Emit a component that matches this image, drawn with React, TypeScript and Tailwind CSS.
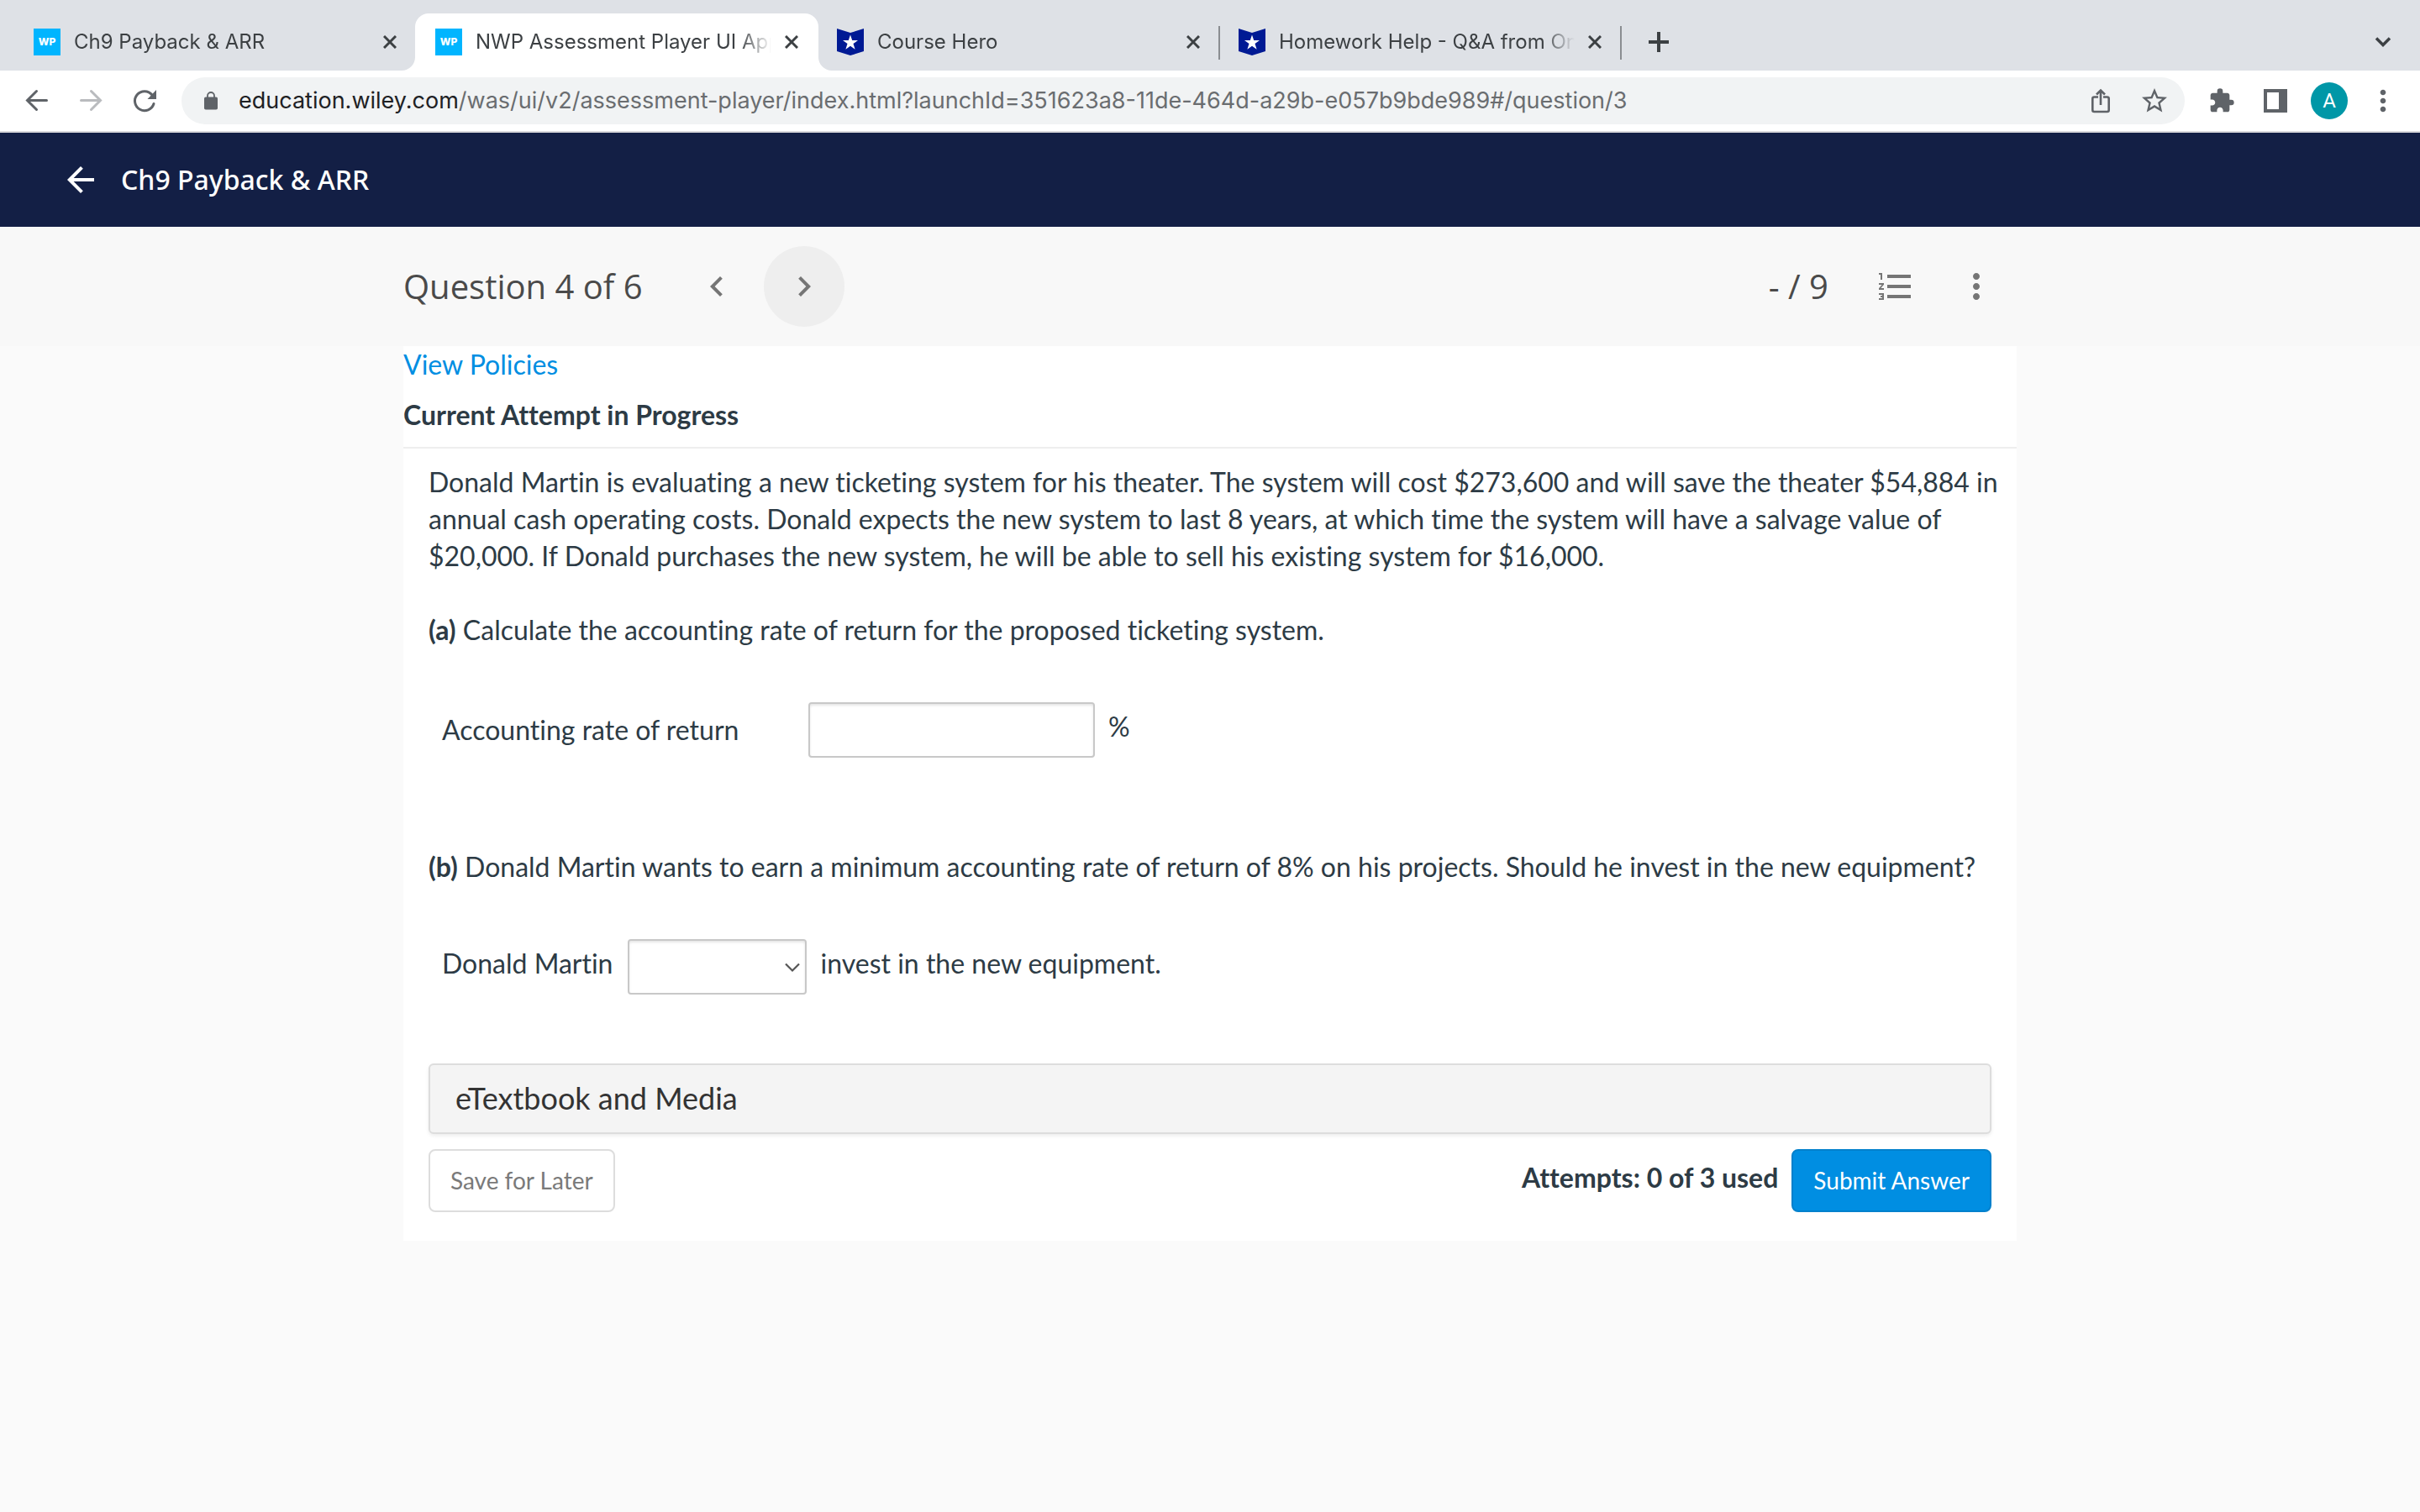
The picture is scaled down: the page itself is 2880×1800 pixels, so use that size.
import type { ReactNode } from "react";
import {
  MdArrowBack,
  MdChevronLeft,
  MdChevronRight,
  MdExtension,
  MdFormatListNumbered,
  MdMoreVert,
  MdStarBorder,
} from "react-icons/md";

function WileyIcon() {
  return (
    <span className="flex size-8 shrink-0 items-center justify-center bg-[#00b5ff] text-xs leading-none font-extrabold text-white">
      WP
    </span>
  );
}

function HeroIcon() {
  return (
    <svg viewBox="0 0 32 32" className="size-8 shrink-0" aria-hidden="true">
      <path d="M0 0 16 5 32 0V27L16 32 0 27Z" fill="#001a94" />
      <path d="M16 7.500 18.200 14H25L19.500 18 21.600 24.800 16 20.700 10.400 24.800 12.500 18 7 14H13.800Z" fill="#fff" />
    </svg>
  );
}

function Cross() {
  return (
    <svg viewBox="0 0 16 16" className="size-4" aria-hidden="true">
      <path d="M1 1 15 15M15 1 1 15" stroke="currentColor" strokeWidth="3" fill="none" />
    </svg>
  );
}

function ArrowLeft() {
  return (
    <svg viewBox="0 0 40 40" className="size-10" fill="none" stroke="currentColor" strokeWidth="3" strokeLinecap="round" aria-hidden="true">
      <path d="M31.500 19.500H9M19.500 8.500 8.500 19.500 19.500 30.500" />
    </svg>
  );
}

function ArrowRight() {
  return (
    <svg viewBox="0 0 40 40" className="size-10" fill="none" stroke="currentColor" strokeWidth="3" strokeLinecap="round" aria-hidden="true">
      <path d="M8.500 19.500H31M20.500 8.500 31.500 19.500 20.500 30.500" />
    </svg>
  );
}

function Reload() {
  return (
    <svg viewBox="0 0 40 40" className="size-10" fill="none" aria-hidden="true">
      <path d="M29 13A11.500 11.500 0 1 0 31 23.500" stroke="currentColor" strokeWidth="3" strokeLinecap="round" />
      <path d="M34 7V18H23.500Z" fill="currentColor" />
    </svg>
  );
}

type TabProps = { title: string; icon: ReactNode; active?: boolean; divider?: boolean };

function Tab({ title, icon, active, divider }: TabProps) {
  return (
    <div className="relative flex h-[68px] w-[478px] shrink-0 items-center pr-3.5 pl-6">
      {active && (
        <>
          <span className="absolute inset-y-0 left-0 -right-0.5 rounded-t-2xl bg-white" />
          <svg viewBox="0 0 16 16" className="absolute bottom-0 -left-4 size-4" aria-hidden="true">
            <path d="M16 0V16H0A16 16 0 0 0 16 0Z" fill="#fff" />
          </svg>
          <svg viewBox="0 0 16 16" className="absolute bottom-0 -right-[18px] size-4" aria-hidden="true">
            <path d="M0 0V16H16A16 16 0 0 1 0 0Z" fill="#fff" />
          </svg>
        </>
      )}
      <div className="relative flex min-w-0 flex-1 items-center">
        {icon}
        <span className="mr-2 ml-4 flex-1 overflow-hidden [mask-image:linear-gradient(to_right,black_89%,transparent)] text-2xl whitespace-nowrap text-[#3c4043]">
          {title}
        </span>
        <button type="button" aria-label={`Close ${title}`} className="flex size-8 items-center justify-center text-[#3c4043]">
          <Cross />
        </button>
      </div>
      {divider && <span className="absolute top-[15px] -right-0.5 h-10 w-0.5 bg-[#8a8d91]" />}
    </div>
  );
}

function BrowserChrome() {
  return (
    <header className="font-[Inter,sans-serif]">
      <div className="flex h-[84px] items-end bg-[#dee1e6] px-4">
        <Tab title="Ch9 Payback & ARR" icon={<WileyIcon />} />
        <Tab title="NWP Assessment Player UI Application" icon={<WileyIcon />} active />
        <Tab title="Course Hero" icon={<HeroIcon />} divider />
        <Tab title="Homework Help - Q&A from Online Tutors" icon={<HeroIcon />} divider />
        <button type="button" aria-label="New tab" className="ml-7 flex h-[68px] w-9 items-center justify-center text-[#3c4043]">
          <svg viewBox="0 0 24 24" className="size-6" aria-hidden="true">
            <path d="M12 0V24M0 12H24" stroke="currentColor" strokeWidth="4" />
          </svg>
        </button>
        <button type="button" aria-label="Search tabs" className="mr-2.5 ml-auto flex h-[68px] w-9 items-center justify-center text-[#3c4043]">
          <svg viewBox="0 0 20 12" className="h-3 w-5" aria-hidden="true">
            <path d="M2 1.500 10 9.500 18 1.500" stroke="currentColor" strokeWidth="3.500" fill="none" />
          </svg>
        </button>
      </div>
      <div className="flex h-[74px] items-center border-b-2 border-[#d9d9dc] bg-white pr-4 pl-6 text-[#5f6368]">
        <button type="button" aria-label="Back">
          <ArrowLeft />
        </button>
        <button type="button" aria-label="Forward" className="ml-6 text-[#b9bbbe]">
          <ArrowRight />
        </button>
        <button type="button" aria-label="Reload" className="ml-6">
          <Reload />
        </button>
        <div className="ml-6 flex h-14 min-w-0 flex-1 items-center rounded-full bg-[#f1f3f4] pr-[18px] pl-[26px]">
          <svg viewBox="0 0 18 22" className="h-[22px] w-[18px] shrink-0" aria-hidden="true">
            <path d="M5 9V5a4 4 0 0 1 8 0V9" fill="none" stroke="currentColor" strokeWidth="1.800" />
            <rect x="1" y="6.500" width="16" height="15" rx="1.800" fill="currentColor" />
          </svg>
          <div className="ml-6 flex-1 overflow-hidden text-[27px] whitespace-nowrap text-[#6a6d70]">
            <span className="text-[#202124]">education.wiley.com</span>
            /was/ui/v2/assessment-player/index.html?launchId=351623a8-11de-464d-a29b-e057b9bde989#/question/3
          </div>
          <button type="button" aria-label="Share">
            <svg viewBox="0 0 22 30" className="h-[30px] w-[22px]" fill="none" stroke="currentColor" strokeWidth="2.600" aria-hidden="true">
              <path d="M8 10.500H3.300a2 2 0 0 0-2 2V26a2 2 0 0 0 2 2H18.700a2 2 0 0 0 2-2V12.500a2 2 0 0 0-2-2H14" />
              <path d="M11 20V3M6 7.500 11 2.500 16 7.500" />
            </svg>
          </button>
          <button type="button" aria-label="Bookmark" className="ml-[35px]">
            <MdStarBorder size={36} />
          </button>
        </div>
        <button type="button" aria-label="Extensions" className="ml-7">
          <MdExtension size={32} />
        </button>
        <button type="button" aria-label="Side panel" className="ml-[34px]">
          <svg viewBox="0 0 28 28" className="size-7" aria-hidden="true">
            <path d="M0 0H28V28H0ZM4 4V24H18V4Z" fill="currentColor" fillRule="evenodd" />
          </svg>
        </button>
        <button type="button" aria-label="Profile" className="ml-7 flex size-11 items-center justify-center rounded-full bg-[#0097a7] font-[Roboto,sans-serif] text-2xl text-white">
          A
        </button>
        <button type="button" aria-label="Browser menu" className="mr-2 ml-[22px]">
          <MdMoreVert size={40} />
        </button>
      </div>
    </header>
  );
}

const iconButton = "flex size-24 items-center justify-center rounded-full text-[#757575]";
const field = "h-[66px] appearance-none rounded-[4px] border-2 border-[#c8c8c8] bg-white shadow-[inset_0_2px_3px_rgba(0,0,0,0.1)]";

export default function App() {
  return (
    <div className="min-h-screen bg-[#fafafa]">
      <BrowserChrome />
      <div className="flex h-28 items-center bg-[#131f45] pl-[72px] text-white">
        <button type="button" aria-label="Back to assignments">
          <MdArrowBack size={48} />
        </button>
        <h1 className="ml-6 font-['Noto_Sans',sans-serif] text-[32px] font-medium">Ch9 Payback &amp; ARR</h1>
      </div>
      <div className="bg-[#f8f8f8] font-['Open_Sans',sans-serif] text-[40px] text-[#4a4a4a]">
        <div className="mx-auto flex h-[142px] w-2/3 items-center">
          <h2>Question 4 of 6</h2>
          <button type="button" aria-label="Previous question" className={`${iconButton} ml-10`}>
            <MdChevronLeft size={48} />
          </button>
          <button type="button" aria-label="Next question" className={`${iconButton} ml-2 bg-[#eeeeee]`}>
            <MdChevronRight size={48} />
          </button>
          <span className="mr-8 ml-auto">- / 9</span>
          <button type="button" aria-label="Question list" className={iconButton}>
            <MdFormatListNumbered size={48} />
          </button>
          <button type="button" aria-label="More options" className={iconButton}>
            <MdMoreVert size={48} />
          </button>
        </div>
      </div>
      <main className="mx-auto w-2/3 bg-white pb-[34px] font-[Lato,sans-serif] text-[32px] leading-[44px] text-[#2d3b45] [font-variant-ligatures:none]">
        <div className="border-b-2 border-[#eeeeee] pb-4">
          <a href="#policies" className="block text-[#008ee2]">
            View Policies
          </a>
          <h3 className="mt-4 font-bold">Current Attempt in Progress</h3>
        </div>
        <div className="px-[30px] pt-[18px]">
          <p className="-mr-6">
            Donald Martin is evaluating a new ticketing system for his theater. The system will cost $273,600 and will
            save the theater $54,884 in annual cash operating costs. Donald expects the new system to last 8 years, at
            which time the system will have a salvage value of $20,000. If Donald purchases the new system, he will be
            able to sell his existing system for $16,000.
          </p>
          <p className="mt-11">
            <b>(a)</b> Calculate the accounting rate of return for the proposed ticketing system.
          </p>
          <div className="mt-16 flex items-center pl-4">
            <label htmlFor="arr" className="w-[436px]">
              Accounting rate of return
            </label>
            <input id="arr" type="text" className={`${field} w-[341px] px-3`} />
            <span className="mb-2 ml-4">%</span>
          </div>
          <p className="mt-[108px]">
            <b>(b)</b> Donald Martin wants to earn a minimum accounting rate of return of 8% on his projects. Should he
            invest in the new equipment?
          </p>
          <div className="mt-16 flex items-center pl-4">
            <label htmlFor="decision" className="mb-2">
              Donald Martin
            </label>
            <span className="relative ml-[18px] flex">
              <select id="decision" defaultValue="" className={`${field} w-[213px] px-3`}>
                <option value=""></option>
                <option value="should">should</option>
                <option value="should not">should not</option>
              </select>
              <svg viewBox="0 0 20 12" className="pointer-events-none absolute top-7 right-[7px] h-3 w-5" aria-hidden="true">
                <path d="M2 1.500 10 9.500 18 1.500" stroke="#555" strokeWidth="2.200" fill="none" />
              </svg>
            </span>
            <span className="mb-2 ml-4">invest in the new equipment.</span>
          </div>
          <button
            type="button"
            className="mt-[82px] block h-[84px] w-full rounded-md border-2 border-[#dddddd] bg-[#f4f4f4] px-[30px] pb-0.5 text-left text-[36px] text-[#333333] shadow-[0_2px_4px_rgba(0,0,0,0.08)]"
          >
            eTextbook and Media
          </button>
          <div className="mt-[18px] flex items-center">
            <button type="button" className="h-[75px] rounded-lg border-2 border-[#dddddd] px-6 pb-0.5 text-[28px] text-[#7a7a7a]">
              Save for Later
            </button>
            <span className="mr-4 mb-2 ml-auto font-bold">Attempts: 0 of 3 used</span>
            <button type="button" className="h-[75px] rounded-lg border-2 border-[#0080cc] bg-[#008ee2] px-6 pb-0.5 text-[28px] text-white">
              Submit Answer
            </button>
          </div>
        </div>
      </main>
    </div>
  );
}
